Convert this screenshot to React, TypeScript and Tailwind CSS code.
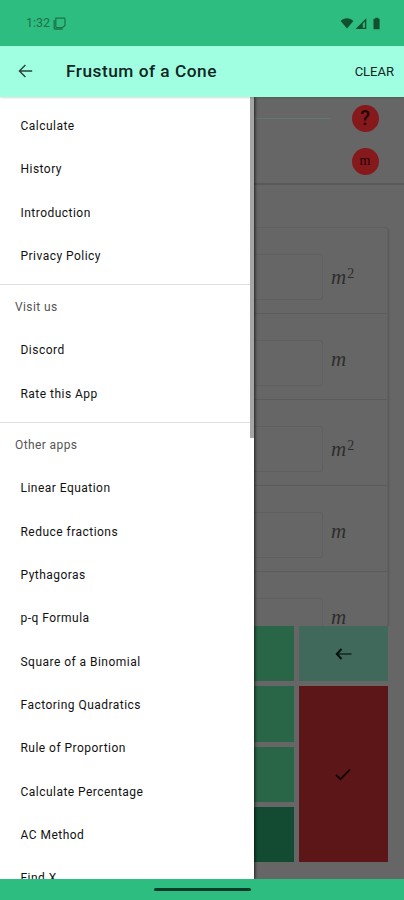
import clsx from 'clsx';

const mainItems = ['Calculate', 'History', 'Introduction', 'Privacy Policy'];
const visitItems = ['Discord', 'Rate this App'];
const appItems = [
  'Linear Equation',
  'Reduce fractions',
  'Pythagoras',
  'p-q Formula',
  'Square of a Binomial',
  'Factoring Quadratics',
  'Rule of Proportion',
  'Calculate Percentage',
  'AC Method',
  'Find X',
];

const fields = [
  { id: 1, squared: true },
  { id: 2, squared: false },
  { id: 3, squared: true },
  { id: 4, squared: false },
  { id: 5, squared: false },
];

function StatusBar() {
  return (
    <div className="flex h-[46px] shrink-0 items-center justify-between bg-[#2ebd80] pl-[26px] pr-[23px] text-[#1c7249]">
      <div className="flex items-center gap-[3px]">
        <span className="text-[12.5px] leading-none">1:32</span>
        <svg width="13" height="13" viewBox="0 0 13 13" fill="none" stroke="currentColor">
          <path d="M2.8 1.2h8.2a1 1 0 0 1 1 1v6.3l-2.2 2H3.8a1 1 0 0 1-1-1z" strokeWidth="1.2" />
          <path d="M1.2 3v8a1 1 0 0 0 1 1h7.5" strokeWidth="1.3" />
        </svg>
      </div>
      <svg width="41" height="13" viewBox="0 0 41 13" fill="#12512f">
        <path d="M0.6 3.9C4.2 0.2 9.8 0.2 13.4 3.9L7 11.5z" />
        <path d="M15.5 12L26.3 1.2V12z M24.9 4.6L22.8 6.7V10.7H24.9z" fillRule="evenodd" />
        <path d="M34 1.7h1.3V0.7h3v1h1.3v10.5H33.5V1.7z" />
      </svg>
    </div>
  );
}

function AppBar() {
  return (
    <header className="z-20 flex h-[51px] shrink-0 items-center bg-[#a0ffe1] pl-[18px] pr-[10px] text-[#10251f] shadow-[0_1px_2px_rgba(0,0,0,0.15)]">
      <svg className="-mt-[2px]" width="15" height="14" viewBox="0 0 15 14" fill="none" stroke="#26443b" strokeWidth="1.4">
        <path d="M14.2 7H1.4M7.4 1L1.4 7l6 6" />
      </svg>
      <h1 className="ml-[33px] flex-1 pt-px text-[17.3px] font-medium tracking-[0.5px]">Frustum of a Cone</h1>
      <button className="text-[13px]">CLEAR</button>
    </header>
  );
}

function MenuItems({ items }: { items: string[] }) {
  return (
    <ul>
      {items.map((item) => (
        <li key={item} className="flex h-[43.34px] items-center pl-[20.5px] text-[12px] tracking-[0.47px] text-[#111]">
          {item}
        </li>
      ))}
    </ul>
  );
}

function MenuHeader({ title }: { title: string }) {
  return (
    <h2 className="mt-[6.5px] flex h-[44.6px] items-center border-t border-[#dedede] pl-[15px] text-[12px] tracking-[0.4px] text-[#555]">
      {title}
    </h2>
  );
}

function Drawer() {
  return (
    <nav className="absolute inset-y-0 left-0 z-10 w-[254px] overflow-hidden bg-white pt-[7.4px] shadow-[1px_0_3px_rgba(0,0,0,0.7)]">
      <MenuItems items={mainItems} />
      <MenuHeader title="Visit us" />
      <MenuItems items={visitItems} />
      <MenuHeader title="Other apps" />
      <MenuItems items={appItems} />
      <div className="absolute right-0 top-0 h-[341px] w-1 bg-[#a6a6a6]" />
    </nav>
  );
}

function Badge({ className, children }: { className?: string; children: string }) {
  return (
    <div
      className={clsx(
        'flex h-[27px] w-[27px] items-center justify-center rounded-full bg-[#86191c] leading-none text-[#240305]',
        className,
      )}
    >
      {children}
    </div>
  );
}

function FieldRow({ squared }: { squared: boolean }) {
  return (
    <div className="flex h-[86px] shrink-0 items-start border-b border-[#5c5c5c] pt-[26px]">
      <div className="h-[46px] w-[69px] rounded-r-[3px] border border-l-0 border-[#5f5f5f]" />
      <div
        className={clsx(
          "ml-[8px] font-['Liberation_Serif',serif] text-[21px] italic leading-[24px] text-[#2d2d2d]",
          squared ? 'mt-[11px]' : 'mt-[7px]',
        )}
      >
        m{squared && <sup className="relative -top-[6px] ml-px align-baseline text-[14px] not-italic leading-none">2</sup>}
      </div>
    </div>
  );
}

function Keypad() {
  return (
    <div className="flex h-[253px] shrink-0 gap-[5px] pb-[17px] pr-[16.5px]">
      <div className="flex w-10 flex-col gap-[5px]">
        <div className="flex-1 bg-[#296547]" />
        <div className="flex-1 bg-[#296547]" />
        <div className="flex-1 bg-[#296547]" />
        <div className="flex-1 bg-[#124b32]" />
      </div>
      <div className="flex flex-1 flex-col gap-[5px]">
        <button className="flex h-[55px] items-center justify-center bg-[#40685b]">
          <svg width="17" height="14" viewBox="0 0 17 14" fill="none" stroke="#07100d">
            <path d="M2 7h14.5" strokeWidth="1.1" />
            <path d="M6.5 2L1.8 7l4.7 5" strokeWidth="2" />
          </svg>
        </button>
        <button className="flex flex-1 items-center justify-center bg-[#5c1618]">
          <svg width="16" height="13" viewBox="0 0 16 13" fill="none" stroke="#100303" strokeWidth="1.7">
            <path d="M1 6.8l4.5 4.4L15 1.5" />
          </svg>
        </button>
      </div>
    </div>
  );
}

function Calculator() {
  return (
    <main className="ml-[254px] flex h-full flex-col bg-[#666]">
      <div className="flex h-[88px] shrink-0 justify-between border-b-2 border-[#595959] pr-[25.5px] pt-[7.5px]">
        <div className="mt-[13px] h-px w-[77px] bg-[#5c7a70]" />
        <div className="flex flex-col gap-[16px]">
          <Badge className="text-[20px] font-medium">?</Badge>
          <Badge className="font-['Liberation_Serif',serif] text-[14px]">m</Badge>
        </div>
      </div>
      <div className="min-h-0 flex-1 overflow-hidden pr-4 pt-[42px]">
        <div className="flex flex-col rounded-tr-[3px] border-r border-t border-[#606060] shadow-[1px_1px_2px_rgba(0,0,0,0.15)]">
          {fields.map((field) => (
            <FieldRow key={field.id} squared={field.squared} />
          ))}
        </div>
      </div>
      <Keypad />
    </main>
  );
}

export default function App() {
  return (
    <div className="flex h-[900px] w-[404px] flex-col overflow-hidden font-[Roboto,sans-serif]">
      <StatusBar />
      <AppBar />
      <div className="relative min-h-0 flex-1">
        <Calculator />
        <Drawer />
      </div>
      <footer className="z-20 flex h-[21px] shrink-0 items-center justify-center bg-[#2ebd80]">
        <div className="h-[3px] w-[97px] rounded-full bg-[#0b3b26]" />
      </footer>
    </div>
  );
}
